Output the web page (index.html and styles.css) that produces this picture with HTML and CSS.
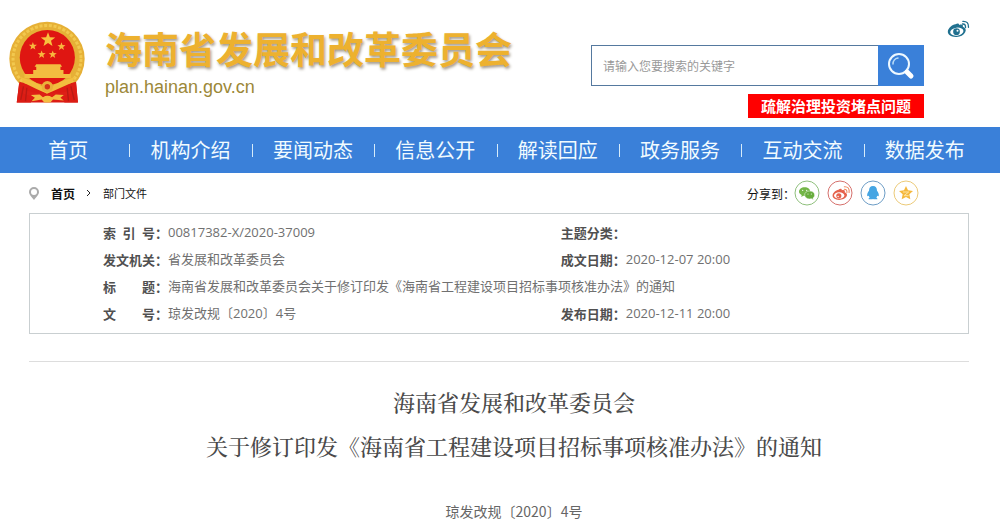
FILE: index.html
```html
<!DOCTYPE html>
<html lang="zh-CN">
<head>
<meta charset="utf-8">
<meta name="viewport" content="width=device-width, initial-scale=1">
<title>海南省发展和改革委员会</title>
<link rel="stylesheet" href="styles.css">
</head>
<body>
<header class="header">
  <svg class="emblem" viewBox="27 20 226 246" aria-hidden="true">
    <path d="M58 196 L50 262 L92 262 L100 250 L184 250 L192 262 L232 262 L226 196Z" fill="#d81a14"/>
    <ellipse cx="140" cy="132" rx="112" ry="110" fill="#e6b036"/>
    <ellipse cx="140" cy="132" rx="101" ry="99" fill="none" stroke="#f2c84e" stroke-width="9" stroke-dasharray="9 5"/>
    <ellipse cx="141" cy="128" rx="82" ry="82" fill="#df1612"/>
    <path d="M58 200 Q140 226 226 200 L232 262 L50 262Z" fill="#dc1c14"/>
    <path d="M143 53 l5.500 15 16 .6 -12.600 10 4.400 15.400 -13.300 -9 -13.300 9 4.400 -15.400 -12.600 -10 16 -.6z" fill="#f8c33e"/>
    <g fill="#f8b73e">
      <path id="star" d="M98 82 l3 8 9 .4 -7 5.600 2.400 8.600 -7.400 -5 -7.400 5 2.400 -8.600 -7 -5.600 9 -.4z"/>
      <use href="#star" x="26" y="25"/>
      <use href="#star" x="59" y="25"/>
      <use href="#star" x="85" y="1"/>
    </g>
    <path d="M108 148h72l5 8h-5v10h-72v-10h-5zM99 165h90v12h22v12H73v-12h26z" fill="#f3bd40"/>
    <path d="M60 186 Q110 200 140 223 Q170 200 224 186 L212 204 Q170 223 140 236 Q110 223 72 204Z" fill="#f2be3f"/>
    <circle cx="141" cy="215" r="17" fill="#eab03a"/>
    <circle cx="141" cy="215" r="8" fill="#d5321a"/>
    <path d="M66 222 Q100 236 128 232 L141 239 L156 232 Q190 236 220 220 L214 236 Q186 246 160 242 L141 248 L122 242 Q92 246 70 236Z" fill="#dd2017"/>
    <path d="M92 240 L118 238 L128 246 Q141 238 155 246 L166 238 L190 240 L180 248 L190 256 L158 253 L150 262 L132 262 L124 253 L94 258 L104 248Z" fill="#f3bd40"/>
    <path d="M70 214 L62 254 M80 218 L76 258 M200 218 L204 258 M211 214 L221 254" stroke="#b91a14" stroke-width="4"/>
  </svg>
  <div class="brand">
    <h1 class="brand-name">海南省发展和改革委员会</h1>
    <div class="brand-domain">plan.hainan.gov.cn</div>
  </div>
  <div class="tools">
    <form class="search" role="search">
      <input class="search-input" type="text" aria-label="搜索" placeholder="请输入您要搜索的关键字">
      <button class="search-button" type="button" aria-label="搜索">
        <svg class="search-icon" viewBox="0 0 28 28" aria-hidden="true">
          <circle cx="12" cy="12" r="10" fill="none" stroke="#eef8ff" stroke-width="2"/>
          <path d="M6 12a6 6 0 0 1 5-6" fill="none" stroke="#b9dcf8" stroke-width="1.500" stroke-linecap="round"/>
          <path d="M20 20l4 4" stroke="#fff" stroke-width="5" stroke-linecap="round"/>
        </svg>
      </button>
    </form>
    <a class="notice" href="#">疏解治理投资堵点问题</a>
  </div>
  <a class="weibo" href="#" aria-label="微博">
    <svg class="weibo-icon" viewBox="1102 30 68 54" aria-hidden="true">
      <path d="M1127 43c5-4 11-4 11 2 7-3 13-1 11 5 8 3 11 9 7 17-5 9-16 15-28 14-15 0-25-7-24-17 1-9 13-20 23-21z" fill="#20708f"/>
      <ellipse cx="1131" cy="65" rx="20" ry="12" fill="#fff" transform="rotate(-8 1131 65)"/>
      <circle cx="1130" cy="65" r="10" fill="#20708f"/>
      <circle cx="1133" cy="62" r="3" fill="#fff"/>
      <path d="M1148 42q10-1 9 11M1149 34q18-1 17 18" fill="none" stroke="#20708f" stroke-width="4" stroke-linecap="round"/>
    </svg>
  </a>
</header>

<nav class="nav">
  <a class="nav-item" href="#">首页</a>
  <a class="nav-item" href="#">机构介绍</a>
  <a class="nav-item" href="#">要闻动态</a>
  <a class="nav-item" href="#">信息公开</a>
  <a class="nav-item" href="#">解读回应</a>
  <a class="nav-item" href="#">政务服务</a>
  <a class="nav-item" href="#">互动交流</a>
  <a class="nav-item" href="#">数据发布</a>
</nav>

<main class="page">
  <div class="bar">
    <div class="crumbs">
      <svg class="pin" viewBox="0 0 10 13" aria-hidden="true"><path fill-rule="evenodd" d="M5 0a5 5 0 0 1 5 5c0 3-3 5-5 8C3 10 0 8 0 5a5 5 0 0 1 5-5zm0 2a3 3 0 1 0 0 6 3 3 0 0 0 0-6z" fill="#aaa"/></svg>
      <a class="crumb crumb-home" href="#">首页</a>
      <svg class="chevron" viewBox="0 0 5 8" aria-hidden="true"><path d="M1 1l3 3-3 3" fill="none" stroke="#222"/></svg>
      <a class="crumb" href="#">部门文件</a>
    </div>
    <div class="share">
      <span class="share-label">分享到：</span>
      <a class="share-link" href="#" aria-label="微信">
        <svg class="share-icon" viewBox="0 0 78 78" aria-hidden="true">
          <circle cx="39" cy="39" r="36" fill="#fff" stroke="#8fc07c" stroke-width="3"/>
          <path d="M32 22c10 0 17 6 17 13S42 48 32 48l-4-1-6 4 1-6c-5-3-8-6-8-10 0-7 7-13 17-13z" fill="#74b648"/>
          <path d="M47 33c9 0 15 5 15 12 0 4-2 7-5 9l1 5-6-3-5 1c-9 0-15-5-15-12s6-12 15-12z" fill="#68ad3d" stroke="#fff" stroke-width="1.500"/>
          <g fill="#fff"><circle cx="26" cy="31" r="2"/><circle cx="38" cy="31" r="2"/><circle cx="42" cy="42" r="1.500"/><circle cx="52" cy="42" r="1.500"/></g>
        </svg>
      </a>
      <a class="share-link" href="#" aria-label="微博">
        <svg class="share-icon" viewBox="0 0 78 78" aria-hidden="true">
          <circle cx="39" cy="39" r="36" fill="#fff" stroke="#d6706c" stroke-width="3"/>
          <g transform="translate(-3 -3) scale(1.100)">
            <path d="M34 29c5-4 10-3 9 2 6-2 10 0 8 5 6 2 8 7 5 12-4 6-12 9-20 9-11-1-19-6-18-13 0-6 9-14 16-15z" fill="#e5624c"/>
            <ellipse cx="36" cy="45" rx="14" ry="9" fill="#fff"/>
            <circle cx="35" cy="46" r="7" fill="#e5624c"/>
            <circle cx="33" cy="48" r="2" fill="#fff"/>
            <path d="M50 28q8 0 7 9M50 21q15-1 13 16" fill="none" stroke="#ef8a62" stroke-width="3" stroke-linecap="round"/>
          </g>
        </svg>
      </a>
      <a class="share-link" href="#" aria-label="QQ">
        <svg class="share-icon" viewBox="0 0 78 78" aria-hidden="true">
          <circle cx="39" cy="39" r="36" fill="#fff" stroke="#6d9dc6" stroke-width="3"/>
          <path d="M39 18c8 0 12 6 12 14 4 5 7 12 5 17l-4-2-3 6c3 1 4 3 3 5H41l-2-1-2 1H26c-1-2 0-4 3-5l-3-6-4 2c-2-5 1-12 5-17 0-8 4-14 12-14z" fill="#45a5e3"/>
        </svg>
      </a>
      <a class="share-link" href="#" aria-label="QQ空间">
        <svg class="share-icon" viewBox="0 0 78 78" aria-hidden="true">
          <circle cx="39" cy="39" r="36" fill="#fff" stroke="#ecca78" stroke-width="3"/>
          <path d="M39 18l6 13 15 2-11 10 3 15-13-7-13 7 3-15-11-10 15-2z" fill="#f5b83d"/>
          <path d="M30 36h17L33 47h14" fill="none" stroke="#fce3a2" stroke-width="3"/>
        </svg>
      </a>
    </div>
  </div>

  <section class="info">
    <table class="info-table">
      <colgroup><col class="col-label"><col class="col-value"><col class="col-label"><col></colgroup>
      <tr><th scope="row">索&ensp;引&ensp;号：</th><td>00817382-X/2020-37009</td><th scope="row">主题分类：</th><td></td></tr>
      <tr><th scope="row">发文机关：</th><td>省发展和改革委员会</td><th scope="row">成文日期：</th><td>2020-12-07 20:00</td></tr>
      <tr><th scope="row">标&emsp;&emsp;题：</th><td colspan="3">海南省发展和改革委员会关于修订印发《海南省工程建设项目招标事项核准办法》的通知</td></tr>
      <tr><th scope="row">文&emsp;&emsp;号：</th><td>琼发改规〔2020〕4号</td><th scope="row">发布日期：</th><td>2020-12-11 20:00</td></tr>
    </table>
  </section>

  <article class="article">
    <h2 class="article-title">海南省发展和改革委员会<br>关于修订印发《海南省工程建设项目招标事项核准办法》的通知</h2>
    <p class="article-number">琼发改规〔2020〕4号</p>
  </article>
</main>
</body>
</html>
```

FILE: styles.css
```css
* {
  box-sizing: border-box;
}

body {
  margin: 0;
  background: #fff;
  color: #555;
  font-family: "Noto Sans CJK SC", sans-serif;
  font-size: 13px;
}

a {
  color: inherit;
  text-decoration: none;
}

svg {
  display: block;
}

/* Header */
.header {
  display: flex;
  align-items: flex-start;
  padding: 20px 30px 9px 9px;
}

.emblem {
  flex: none;
  width: 76px;
  height: 83px;
  margin-top: 1px;
}

.brand {
  flex: none;
  margin: 5px 0 0 20px;
}

.brand-name {
  margin: 0 0 3px;
  color: #edb12f;
  font-size: 37px;
  font-weight: 700;
  line-height: 46px;
  text-shadow: 1px 2px 3px #a39a8c;
  white-space: nowrap;
}

.brand-domain {
  color: #9c8838;
  font-family: "Liberation Sans", sans-serif;
  font-size: 18px;
  line-height: 26px;
}

.tools {
  display: flex;
  flex-direction: column;
  align-items: flex-end;
  gap: 8px;
  width: 333px;
  margin: 25px 0 0 auto;
}

.search {
  display: flex;
  width: 100%;
  height: 41px;
}

.search-input {
  flex: 1;
  min-width: 0;
  padding: 0 11px;
  border: 1px solid #55799f;
  border-right: 0;
  border-radius: 0;
  background: #fff;
  color: #555;
  font: inherit;
  font-size: 12px;
}

.search-input::placeholder {
  color: #999;
  opacity: 1;
}

.search-button {
  display: grid;
  place-items: center;
  width: 46px;
  padding: 0;
  border: 0;
  background: #3a80d9;
}

.search-icon {
  width: 28px;
  height: 28px;
}

.notice {
  padding: 0 13px;
  background: #f00;
  color: #fff;
  font-size: 15px;
  font-weight: 700;
  line-height: 24px;
}

.weibo {
  margin-left: 23px;
}

.weibo-icon {
  width: 23px;
  height: 18px;
}

/* Main navigation */
.nav {
  display: grid;
  grid-template-columns: repeat(8, 1fr);
  padding: 0 14px 0 7px;
  background: #3a80d9;
}

.nav-item {
  position: relative;
  color: #f1fbff;
  font-size: 20px;
  line-height: 46px;
  text-align: center;
}

.nav-item + .nav-item::before {
  content: "";
  position: absolute;
  top: 17px;
  left: 0;
  width: 1px;
  height: 13px;
  background: #d5ebfa;
}

/* Breadcrumbs and sharing */
.page {
  margin: 0 31px 0 29px;
}

.bar {
  display: flex;
  align-items: center;
  justify-content: space-between;
  height: 40px;
  padding-right: 50px;
  color: #111;
  font-size: 12px;
}

.crumbs {
  display: flex;
  align-items: center;
}

.pin {
  width: 10px;
  height: 13px;
  margin-right: 12px;
}

.crumb {
  font-size: 11px;
}

.crumb-home {
  font-size: 12px;
  font-weight: 700;
}

.chevron {
  width: 5px;
  height: 8px;
  margin: 0 12px 0 11px;
}

.share {
  display: flex;
  align-items: center;
  gap: 7px;
}

.share-label {
  margin-right: -8px;
}

.share-icon {
  width: 26px;
  height: 26px;
}

/* Document details */
.info {
  padding: 5px 0 6px 73px;
  border: 1px solid #c9cfd1;
}

.info-table {
  width: 100%;
  border-collapse: collapse;
  table-layout: fixed;
  line-height: 27px;
}

.info-table th,
.info-table td {
  height: 27px;
  padding: 0;
  text-align: left;
  white-space: nowrap;
}

.info-table th {
  color: #505050;
  font-weight: 700;
}

.info-table td {
  color: #707070;
  font-family: "Open Sans", "Noto Sans CJK SC", sans-serif;
}

.col-label {
  width: 65px;
}

.col-value {
  width: 45.4%;
}

/* Article */
.article {
  margin-top: 27px;
  padding: 20px 0 0 30px;
  border-top: 1px solid #ddd;
  text-align: center;
}

.article-title {
  margin: 0;
  color: #4a4a4a;
  font-family: "Liberation Serif", "Noto Serif CJK SC", "Noto Sans CJK SC", serif;
  font-size: 22px;
  font-weight: 500;
  line-height: 44px;
}

.article-number {
  margin: 29px 0 0;
  color: #666;
  font-size: 14px;
  line-height: 24px;
}
```
